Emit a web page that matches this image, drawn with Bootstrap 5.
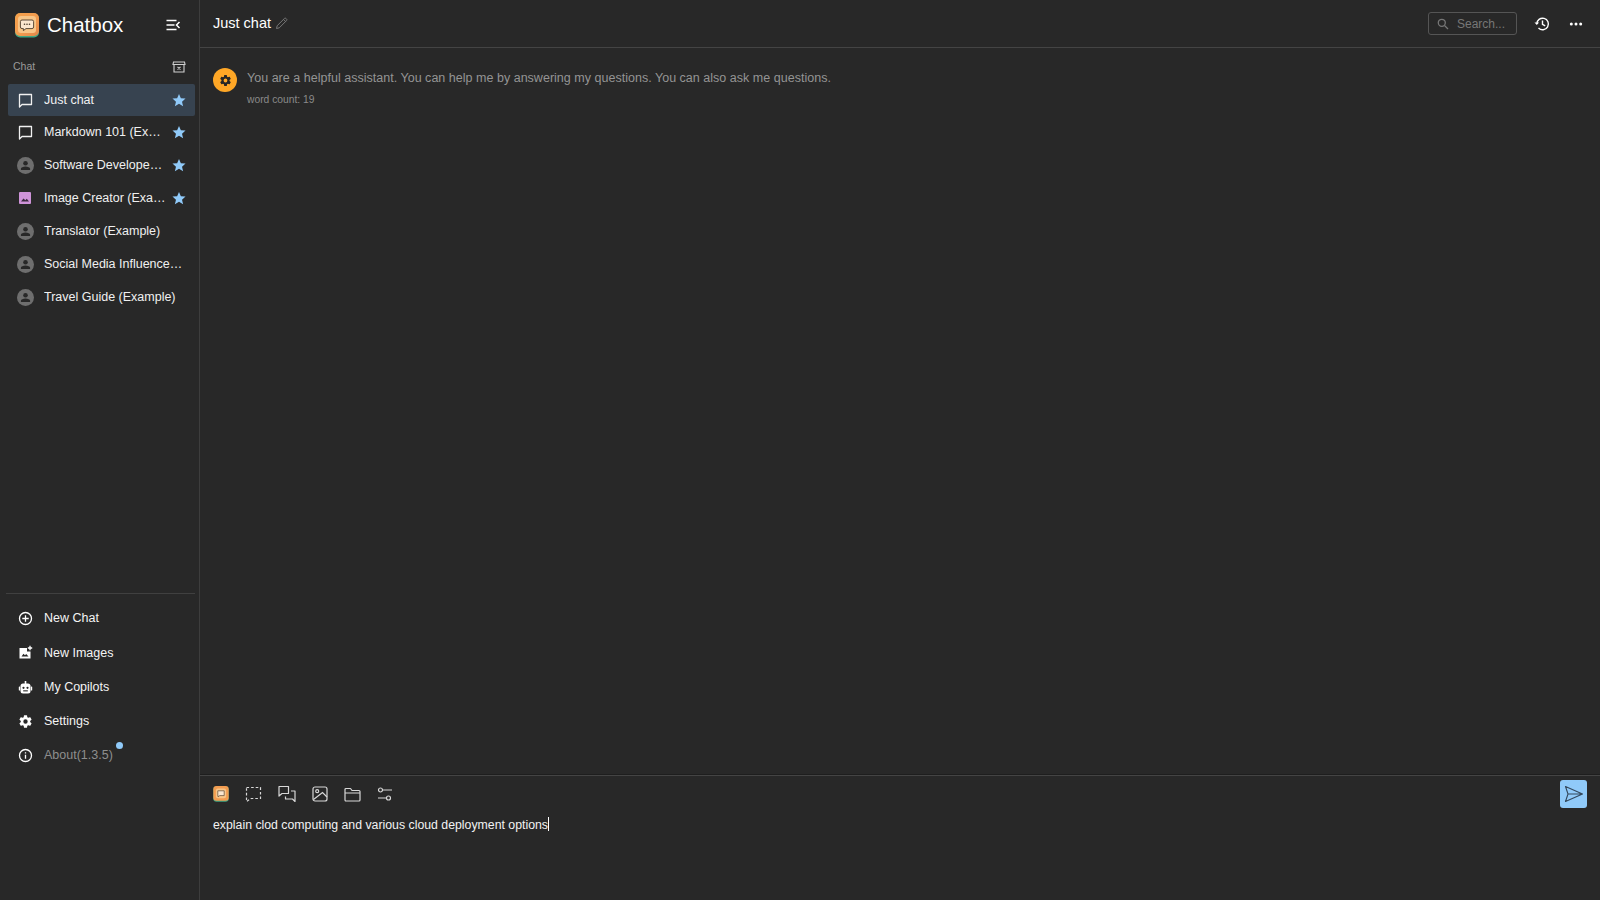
<!DOCTYPE html>
<html lang="en"><head><meta charset="utf-8"><title>Chatbox</title>
<link href="https://cdn.jsdelivr.net/npm/bootstrap@5.3.0/dist/css/bootstrap.min.css" rel="stylesheet">
<style>
html,body{height:100%;}
body{background:#282828;color:#fff;font-family:"Liberation Sans",Arial,sans-serif;font-size:12.5px;overflow:hidden;}
.app-shell{height:900px;}
.side-pane{width:200px;flex:none;border-right:1px solid #3d3d3d;padding:0 4px 0 6px;}
.brand-row{height:50px;padding-left:9px;padding-right:14px;}
.brand-name{font-size:20.5px;margin-left:8px;line-height:1;}
.section-row{height:34px;padding:0 9px 0 7px;color:#9a9a9a;font-size:10.5px;}
.chat-row{height:32px;padding:0 9px 0 8px;margin:0 0 0 2px;width:187px;color:#f0f0f0;border-radius:2px;font-size:12.5px;}
.chat-row.is-active{background:#374350;}
.chat-gap-a{margin-bottom:.5px}
.chat-gap-b{margin-top:1px}
.row-icon{width:20px;height:20px;flex:none;display:flex;align-items:center;justify-content:center;margin-right:9px;margin-left:-1px}
.row-label{flex:1;min-width:0;white-space:nowrap;overflow:hidden;text-overflow:ellipsis;}
.star-icon{flex:none;margin-left:6px;}
.person-dot{width:17px;height:17px;border-radius:50%;background:#6e6e6e;display:flex;align-items:center;justify-content:center;}
.side-rule{border-top:1px solid #404040;margin:0 0 8px 0;}
.foot-row{height:34.3px;padding:0 0 0 10px;color:#f4f4f4;}
.foot-row.is-muted{color:#8e8e8e;}
.about-label{position:relative;}
.about-dot{position:absolute;right:-10px;top:-4px;width:7px;height:7px;border-radius:50%;background:#90caf9;}
.top-bar{height:48px;border-bottom:1px solid #444;padding:0 16px 0 13px;flex:none;}
.top-title{font-size:14.5px;color:#fff;}
.search-box{width:89px;height:23px;border:1px solid #555;border-radius:3px;color:#777;font-size:12px;padding-left:8px;margin-right:17px;}
.msg-area{padding:20px 13px;}
.bot-avatar{width:24px;height:24px;border-radius:50%;background:#ffa726;flex:none;margin-right:10px;display:flex;align-items:center;justify-content:center;}
.msg-text{color:#949494;font-size:12.5px;line-height:20px;letter-spacing:.02px;}
.msg-meta{color:#8a8a8a;font-size:10.3px;margin-top:4px;}
.composer{height:125px;border-top:1px solid #444;flex:none;padding:3px 13px 0 13px;position:relative;box-shadow:0 -1px 0 #1e1e1e;}
.tool-row{height:30px;gap:16px;}
.send-btn{width:27px;height:28px;background:#90caf9;border:0;border-radius:3px;padding:0;display:flex;align-items:center;justify-content:center;}
.draft-text{font-size:12.3px;color:#f2f2f2;margin-top:7px;line-height:18px;}
.caret-mark{display:inline-block;width:1px;height:14px;background:#fff;vertical-align:-2px;}
</style></head><body>
<div class="app-shell d-flex">
<aside class="side-pane d-flex flex-column">
  <div class="brand-row d-flex align-items-center">
    <svg width="24" height="25" viewBox="0 0 24 25"><defs><linearGradient id="lg" x1="0" y1="0" x2="1" y2="1"><stop offset="0" stop-color="#f6a04a"/><stop offset=".55" stop-color="#f39c50"/><stop offset="1" stop-color="#e0854a"/></linearGradient></defs><rect x="0" y="0.5" width="24" height="24" rx="5" fill="#3fa684"/><rect x="0" y="0" width="24" height="23" rx="5" fill="url(#lg)"/><rect x="3" y="3" width="18" height="17" rx="3" fill="#f8c587"/><path d="M7 7h10a1.6 1.6 0 0 1 1.6 1.6v5.4a1.6 1.6 0 0 1-1.6 1.6h-6l-2.6 2v-2H7A1.6 1.6 0 0 1 5.4 14V8.600A1.600 1.600 0 0 1 7 7z" fill="#fbe7cf" stroke="#4a3b2c" stroke-width=".9"/><circle cx="9.500" cy="11.300" r=".8" fill="#4a3b2c"/><circle cx="12" cy="11.300" r=".8" fill="#4a3b2c"/><circle cx="14.500" cy="11.300" r=".8" fill="#4a3b2c"/></svg>
    <span class="brand-name flex-grow-1">Chatbox</span>
    <svg width="16" height="16" viewBox="0 0 16 16" fill="none" stroke="#fff" stroke-width="1.500"><path d="M1.500 3.500h10M1.500 8h8M1.500 12.500h10M14.500 5 11.500 8l3 3"/></svg>
  </div>
  <div class="section-row d-flex align-items-center justify-content-between">
    <span>Chat</span>
    <svg width="14" height="14" viewBox="0 0 14 14" fill="none" stroke="#d0d0d0" stroke-width="1.100"><path d="M1.500 2h11l.5 2.500H1zM2 4.500V12h10V4.500"/><path d="M5.500 6.800 8.500 9.500M8.500 6.800 5.500 9.500"/></svg>
  </div>
  <div class="chat-row is-active d-flex align-items-center">
    <span class="row-icon"><svg width="15" height="15" viewBox="0 0 15 15" fill="none" stroke="#f0f0f0" stroke-width="1.300"><path d="M1.500 1.500h12v10H4L1.500 14z" stroke-linejoin="round"/></svg></span>
    <span class="row-label">Just chat</span>
    <svg class="star-icon" width="14" height="14" viewBox="0 0 24 24" fill="#90caf9"><path d="M12 1.500 15.200 8.800l8 .7-6 5.300 1.800 7.800L12 18.500 5 22.600l1.800-7.800-6-5.300 8-.7z"/></svg>
  </div>
  <div class="chat-row d-flex align-items-center">
    <span class="row-icon"><svg width="15" height="15" viewBox="0 0 15 15" fill="none" stroke="#f0f0f0" stroke-width="1.300"><path d="M1.500 1.500h12v10H4L1.500 14z" stroke-linejoin="round"/></svg></span>
    <span class="row-label">Markdown 101 (Example)</span>
    <svg class="star-icon" width="14" height="14" viewBox="0 0 24 24" fill="#90caf9"><path d="M12 1.500 15.200 8.800l8 .7-6 5.300 1.800 7.800L12 18.500 5 22.600l1.800-7.800-6-5.300 8-.7z"/></svg>
  </div>
  <div class="chat-row chat-gap-b d-flex align-items-center">
    <span class="row-icon"><span class="person-dot"><svg width="11" height="11" viewBox="0 0 12 12" fill="#282828"><circle cx="6" cy="3.500" r="2.500"/><path d="M1 11V9.500C1 8 3.500 7 6 7s5 1 5 2.500V11z"/></svg></span></span>
    <span class="row-label">Software Developer (Example)</span>
    <svg class="star-icon" width="14" height="14" viewBox="0 0 24 24" fill="#90caf9"><path d="M12 1.500 15.200 8.800l8 .7-6 5.300 1.800 7.800L12 18.500 5 22.600l1.800-7.800-6-5.300 8-.7z"/></svg>
  </div>
  <div class="chat-row chat-gap-b d-flex align-items-center">
    <span class="row-icon"><svg width="14" height="14" viewBox="0 0 14 14"><rect x="1" y="1" width="12" height="12" rx="1" fill="#ce93d8"/><path d="M3 10.500 5.500 7.500 7.300 9.300 8.800 7.800 11 10.500z" fill="#3a2a3e"/></svg></span>
    <span class="row-label">Image Creator (Example)</span>
    <svg class="star-icon" width="14" height="14" viewBox="0 0 24 24" fill="#90caf9"><path d="M12 1.500 15.200 8.800l8 .7-6 5.300 1.800 7.800L12 18.500 5 22.600l1.800-7.800-6-5.300 8-.7z"/></svg>
  </div>
  <div class="chat-row chat-gap-b d-flex align-items-center">
    <span class="row-icon"><span class="person-dot"><svg width="11" height="11" viewBox="0 0 12 12" fill="#282828"><circle cx="6" cy="3.500" r="2.500"/><path d="M1 11V9.500C1 8 3.500 7 6 7s5 1 5 2.500V11z"/></svg></span></span>
    <span class="row-label">Translator (Example)</span>
  </div>
  <div class="chat-row chat-gap-b d-flex align-items-center">
    <span class="row-icon"><span class="person-dot"><svg width="11" height="11" viewBox="0 0 12 12" fill="#282828"><circle cx="6" cy="3.500" r="2.500"/><path d="M1 11V9.500C1 8 3.500 7 6 7s5 1 5 2.500V11z"/></svg></span></span>
    <span class="row-label">Social Media Influencer (Example)</span>
  </div>
  <div class="chat-row chat-gap-b d-flex align-items-center">
    <span class="row-icon"><span class="person-dot"><svg width="11" height="11" viewBox="0 0 12 12" fill="#282828"><circle cx="6" cy="3.500" r="2.500"/><path d="M1 11V9.500C1 8 3.500 7 6 7s5 1 5 2.500V11z"/></svg></span></span>
    <span class="row-label">Travel Guide (Example)</span>
  </div>
  <div class="mt-auto">
    <div class="side-rule"></div>
    <div class="foot-row d-flex align-items-center"><span class="row-icon"><svg width="15" height="15" viewBox="0 0 15 15" fill="none" stroke="#fff" stroke-width="1.300"><circle cx="7.500" cy="7.500" r="6"/><path d="M7.500 4.300v6.400M4.300 7.500h6.400"/></svg></span><span>New Chat</span></div>
    <div class="foot-row d-flex align-items-center"><span class="row-icon"><svg width="15" height="15" viewBox="0 0 15 15"><path d="M1.500 3H9v3.500h3.500V13.500H1.500z" fill="#fff"/><path d="M3.500 11.500 5.500 8.800 7 10.300 8.200 9 10.500 11.500z" fill="#282828"/><path d="M12 .8v4.400M9.800 3h4.400" stroke="#fff" stroke-width="1.300"/></svg></span><span>New Images</span></div>
    <div class="foot-row d-flex align-items-center"><span class="row-icon"><svg width="15" height="15" viewBox="0 0 15 15" fill="#fff"><rect x="2.500" y="3.500" width="10" height="10" rx="2.500"/><rect x="6.700" y="1" width="1.600" height="3"/><rect x=".8" y="6.500" width="1.400" height="4" rx=".6"/><rect x="12.800" y="6.500" width="1.400" height="4" rx=".6"/><circle cx="5.500" cy="7.800" r="1.100" fill="#282828"/><circle cx="9.500" cy="7.800" r="1.100" fill="#282828"/><rect x="5.200" y="10.300" width="4.600" height="1.100" fill="#282828"/></svg></span><span>My Copilots</span></div>
    <div class="foot-row d-flex align-items-center"><span class="row-icon"><svg width="15" height="15" viewBox="0 0 24 24" fill="#fff"><path d="M19.430 12.980c.04-.32.07-.64.07-.98s-.03-.66-.07-.98l2.110-1.650a.5.500 0 0 0 .12-.64l-2-3.460a.5.500 0 0 0-.61-.22l-2.490 1a7.300 7.300 0 0 0-1.690-.98l-.38-2.650A.49.490 0 0 0 14 2h-4a.49.490 0 0 0-.49.420l-.38 2.650c-.61.250-1.170.590-1.690.98l-2.490-1a.5.500 0 0 0-.61.220l-2 3.460a.49.490 0 0 0 .12.640l2.110 1.650c-.04.320-.07.650-.07.980s.03.660.07.980l-2.110 1.650a.5.500 0 0 0-.12.640l2 3.460c.12.220.39.300.61.220l2.490-1c.52.400 1.080.730 1.690.98l.38 2.650c.03.240.24.420.49.420h4c.25 0 .46-.18.49-.42l.38-2.650c.61-.25 1.170-.59 1.690-.98l2.490 1c.23.090.49 0 .61-.22l2-3.460a.5.500 0 0 0-.12-.64zM12 15.500a3.500 3.500 0 1 1 0-7 3.500 3.500 0 0 1 0 7z"/></svg></span><span>Settings</span></div>
    <div class="foot-row is-muted d-flex align-items-center"><span class="row-icon"><svg width="15" height="15" viewBox="0 0 15 15" fill="none" stroke="#fff" stroke-width="1.300"><circle cx="7.500" cy="7.500" r="6"/><path d="M7.500 6.700v4M7.500 4.200v1.400"/></svg></span><span class="about-label">About(1.3.5)<span class="about-dot"></span></span></div>
    <div style="height:127px"></div>
  </div>
</aside>
<main class="flex-grow-1 d-flex flex-column" style="min-width:0">
  <header class="top-bar d-flex align-items-center">
    <span class="top-title">Just chat</span>
    <svg class="ms-1" width="13" height="13" viewBox="0 0 13 13" fill="none" stroke="#777" stroke-width="1"><path d="M1.500 11.500l.7-2.800L9.500 1.400a1 1 0 0 1 1.400 0l.7.700a1 1 0 0 1 0 1.400L4.300 10.800zM8.500 2.400l2.100 2.100"/></svg>
    <div class="search-box ms-auto d-flex align-items-center"><svg class="me-2" width="12" height="12" viewBox="0 0 12 12" fill="none" stroke="#777" stroke-width="1.300"><circle cx="4.800" cy="4.800" r="3.500"/><path d="M7.500 7.500 11 11"/></svg><span>Search...</span></div>
    <svg width="16" height="16" viewBox="0 0 16 16" fill="none" stroke="#fff" stroke-width="1.400"><path d="M2.800 8a5.800 5.800 0 1 1 1.700 4.100"/><path d="M8.500 4.500V8.300l2.700 1.600"/><path d="M.5 6.500 2.800 9l2.300-2.500" fill="#fff" stroke="none"/></svg>
    <svg class="ms-3" width="16" height="16" viewBox="0 0 16 16" fill="#fff" style="margin-left:18px!important"><circle cx="3.300" cy="8" r="1.500"/><circle cx="8" cy="8" r="1.500"/><circle cx="12.700" cy="8" r="1.500"/></svg>
  </header>
  <section class="msg-area flex-grow-1 d-flex align-items-start" style="min-height:0">
    <div class="bot-avatar"><svg width="13" height="13" viewBox="0 0 24 24" fill="#262626"><path d="M19.430 12.980c.04-.32.07-.64.07-.98s-.03-.66-.07-.98l2.110-1.650a.5.500 0 0 0 .12-.64l-2-3.460a.5.500 0 0 0-.61-.22l-2.490 1a7.300 7.300 0 0 0-1.690-.98l-.38-2.650A.49.490 0 0 0 14 2h-4a.49.490 0 0 0-.49.420l-.38 2.650c-.61.250-1.170.590-1.690.98l-2.490-1a.5.500 0 0 0-.61.220l-2 3.460a.49.490 0 0 0 .12.640l2.110 1.650c-.04.320-.07.650-.07.980s.03.660.07.980l-2.110 1.650a.5.500 0 0 0-.12.640l2 3.460c.12.220.39.300.61.220l2.490-1c.52.400 1.080.730 1.690.98l.38 2.650c.03.240.24.420.49.420h4c.25 0 .46-.18.49-.42l.38-2.650c.61-.25 1.170-.59 1.690-.98l2.490 1c.23.090.49 0 .61-.22l2-3.460a.5.500 0 0 0-.12-.64zM12 15.500a3.500 3.500 0 1 1 0-7 3.500 3.500 0 0 1 0 7z"/></svg></div>
    <div>
      <div class="msg-text">You are a helpful assistant. You can help me by answering my questions. You can also ask me questions.</div>
      <div class="msg-meta">word count: 19</div>
    </div>
  </section>
  <footer class="composer">
    <div class="tool-row d-flex align-items-center">
      <svg width="16" height="16" viewBox="0 0 24 25"><rect y=".5" width="24" height="24" rx="5" fill="#3fa684"/><rect width="24" height="23" rx="5" fill="#f39c50"/><rect x="4" y="4" width="16" height="15" rx="3" fill="#f8c587"/><path d="M7 7.500h10v7.500h-7l-2.500 2v-2H7z" fill="#fbe7cf" stroke="#4a3b2c"/></svg>
      <svg width="17" height="17" viewBox="0 0 17 17" fill="none" stroke="#d8d8d8" stroke-width="1.200" stroke-dasharray="2.600 2"><path d="M1.500 1.500h14v11H6l-4.500 3z"/></svg>
      <svg width="18" height="18" viewBox="0 0 18 18" fill="none" stroke="#d8d8d8" stroke-width="1.200" stroke-linejoin="round"><path d="M1 1.500h9.500v7H4L1 11zM13 6h4v10.500L14.500 14H7.500v-2.500"/></svg>
      <svg width="16" height="16" viewBox="0 0 16 16" fill="none" stroke="#d8d8d8" stroke-width="1.200"><rect x="1" y="1" width="14" height="14" rx="2"/><circle cx="5.200" cy="5.200" r="1.500"/><path d="M1.500 13.500 10.500 6.500 15 11"/></svg>
      <svg width="17" height="17" viewBox="0 0 17 17" fill="none" stroke="#d8d8d8" stroke-width="1.200" stroke-linejoin="round"><path d="M1 3.500a1 1 0 0 1 1-1h4.500l1.500 2h7a1 1 0 0 1 1 1v8.500a1 1 0 0 1-1 1H2a1 1 0 0 1-1-1zM1 7h15"/></svg>
      <svg width="16" height="16" viewBox="0 0 16 16" fill="none" stroke="#d8d8d8" stroke-width="1.200"><circle cx="3.500" cy="4" r="2"/><circle cx="11.500" cy="12" r="2"/><path d="M5.500 4H15M1 12h8.500"/></svg>
      <button class="send-btn ms-auto" type="button" aria-label="Send"><svg width="20" height="18" viewBox="0 0 20 18" fill="none" stroke="#33485c" stroke-width="1.100" stroke-linejoin="round"><path d="M1.500 1.500 18.500 9 1.500 16.500 4 9zM4 9h14.500"/></svg></button>
    </div>
    <div class="draft-text">explain clod computing and various cloud deployment options<span class="caret-mark"></span></div>
  </footer>
</main>
</div>
</body></html>
